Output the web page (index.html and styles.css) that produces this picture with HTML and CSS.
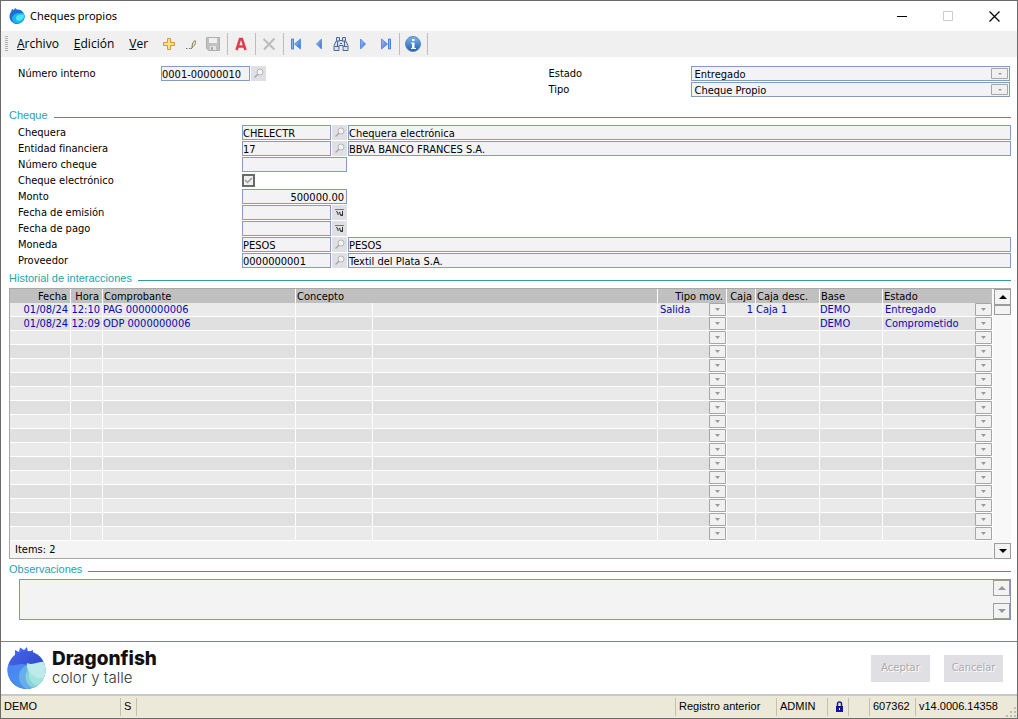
FILE: index.html
```html
<!DOCTYPE html>
<html lang="es">
<head>
<meta charset="utf-8">
<title>Cheques propios</title>
<link rel="stylesheet" href="styles.css">
</head>
<body>
<svg class="defs" aria-hidden="true">
  <defs>
    <linearGradient id="g-dark" x1="0" y1="0" x2="1" y2="1"><stop offset="0" stop-color="#4a6cf2"/><stop offset="1" stop-color="#2335b8"/></linearGradient>
    <linearGradient id="g-mid" x1="0" y1="0" x2="1" y2="1"><stop offset="0" stop-color="#4f80f5"/><stop offset="1" stop-color="#3f9be6"/></linearGradient>
    <linearGradient id="g-light" x1="1" y1="0" x2="0" y2="1"><stop offset="0" stop-color="#c9f2ec"/><stop offset="1" stop-color="#6fc9dd"/></linearGradient>
    <linearGradient id="g-info" x1="0" y1="0" x2="0" y2="1"><stop offset="0" stop-color="#7db4ea"/><stop offset="1" stop-color="#1f5fb0"/></linearGradient>
    <linearGradient id="g-arrow" x1="0" y1="0" x2="1" y2="1"><stop offset="0" stop-color="#a9c9fb"/><stop offset="1" stop-color="#2b63dd"/></linearGradient>
    <clipPath id="logo-body"><circle cx="19.500" cy="24" r="19"/></clipPath>
    <symbol id="lens" viewBox="0 0 15 15"><circle cx="9" cy="6" r="3" fill="#f4f4f4" stroke="#b4b4b4"/><path d="M6.800 8.200L3.500 11.500" stroke="#a8a8a8" stroke-width="1.500"/></symbol>
    <symbol id="cal" viewBox="0 0 15 15"><path d="M3 4.500h9" stroke="#777"/><path d="M4 6.500l2 1v2.500M7 7.500h1v2l2 1M10.500 6v5M8 10h3" fill="none" stroke="#333"/></symbol>
  </defs>
</svg>
<div class="window">
  <header class="titlebar">
    <svg class="app-icon" viewBox="0 0 16 16"><path d="M2 4L3 1l2 1 1-2 2 1.500C12 1 15 4 15.500 8A7.500 7.500 0 1 1 2 4z" fill="#1b6fd6"/><path d="M3 10c1-4 5-6 12-4.500A7 7 0 0 1 8 15.500C5 15 3 13 3 10z" fill="#19b5ec"/><path d="M7 10c0-3 3-4 8-3.500A6 6 0 0 1 10 13c-2 0-3-1-3-3z" fill="#4fe6f2"/></svg>
    <h1>Cheques propios</h1>
    <div class="win-buttons">
      <button aria-label="Minimizar"><svg viewBox="0 0 11 11"><path d="M0 5.500h10" stroke="#000"/></svg></button>
      <button aria-label="Maximizar" disabled><svg viewBox="0 0 11 11"><path d="M.5.500h9v9h-9z" fill="none" stroke="#ccc"/></svg></button>
      <button aria-label="Cerrar"><svg viewBox="0 0 11 11"><path d="M.5.500l10 10M10.500.500l-10 10" stroke="#000" stroke-width="1.200"/></svg></button>
    </div>
  </header>
  <nav class="toolbar">
    <span class="grip"></span>
    <button class="menu"><u>A</u>rchivo</button>
    <button class="menu"><u>E</u>dición</button>
    <button class="menu"><u>V</u>er</button>
    <button class="tool" aria-label="Nuevo"><svg viewBox="0 0 16 16"><path d="M6.500 2.500h3v4h4v3h-4v4h-3v-4h-4v-3h4z" fill="#fbe08a" stroke="#cf9a35"/></svg></button>
    <button class="tool" aria-label="Editar"><svg viewBox="0 0 16 16"><path d="M3 12.500h1.500M6 12.500h1.500" stroke="#777"/><path d="M9 11.500c0-3 1-6 3-7 1.500 1 0 5-3 7l-1 1.500" fill="#f3f2cf" stroke="#77764e"/></svg></button>
    <button class="tool" aria-label="Guardar"><svg viewBox="0 0 16 16"><path d="M1.500 1.500h13v13h-11l-2-2z" fill="#c0c0c0" stroke="#b0b0b0"/><path d="M4 2h8v5H4z" fill="#f0f0f0"/><path d="M5 10h6v4H5z" fill="#e4e4e4"/><path d="M6 11h2v3H6z" fill="#a8a8a8"/></svg></button>
    <span class="sep"></span>
    <button class="tool" aria-label="Anular"><svg viewBox="0 0 16 16"><path d="M3.500 14L7 3h2l3.500 11M5.500 10.500h5" fill="none" stroke="#e23b4a" stroke-width="2.500"/></svg></button>
    <span class="sep"></span>
    <button class="tool" aria-label="Eliminar"><svg viewBox="0 0 16 16"><path d="M2.500 3l11 10.500M13.500 2.500L3 13.500" stroke="#bcbcbc" stroke-width="2"/></svg></button>
    <span class="sep"></span>
    <button class="tool" aria-label="Primero"><svg viewBox="0 0 16 16"><path d="M2.500 3v10h2V3z" fill="#8fb5f5" stroke="#4a7fe0"/><path d="M11.500 3v10L5.500 8z" fill="url(#g-arrow)" stroke="#5c8fe8"/></svg></button>
    <button class="tool" aria-label="Anterior"><svg viewBox="0 0 16 16"><path d="M10.500 3v10L5.500 8z" fill="url(#g-arrow)" stroke="#5c8fe8"/></svg></button>
    <button class="tool" aria-label="Buscar"><svg viewBox="0 0 16 16"><path d="M3.500 1.500h3v3h3v-3h3v3l2.500 5v5h-5v-5h-4v5H1v-5l2.500-5z" fill="#d6e2f3" stroke="#50688f"/><path d="M3 5h4M9 5h4M1.500 10.500h4.500M10 10.500h4.500M7 7.500h2M4.500 5v5M11.500 5v5" stroke="#50688f"/></svg></button>
    <button class="tool" aria-label="Siguiente"><svg viewBox="0 0 16 16"><path d="M5.500 3v10l5-5z" fill="url(#g-arrow)" stroke="#5c8fe8"/></svg></button>
    <button class="tool" aria-label="Último"><svg viewBox="0 0 16 16"><path d="M4.500 3v10l6-5z" fill="url(#g-arrow)" stroke="#5c8fe8"/><path d="M11.500 3v10h2V3z" fill="#8fb5f5" stroke="#4a7fe0"/></svg></button>
    <span class="sep"></span>
    <button class="tool" aria-label="Información"><svg viewBox="0 0 16 16"><circle cx="8" cy="8" r="7.500" fill="url(#g-info)" stroke="#5b87bd"/><path d="M7 3h2.500v2H7zM6 6.500h3.500V12H11v1H6v-1h1V7.500H6z" fill="#fff"/></svg></button>
    <span class="sep"></span>
  </nav>

  <main class="content">
    <div class="head">
      <div class="row narrow"><label for="num">Número interno</label><input class="code" id="num" value="0001-00000010" readonly><button class="pick" aria-label="Buscar número"><svg><use href="#lens"/></svg></button></div>
      <div class="row narrow"><label for="est">Estado</label><select class="combo" id="est"><option>Entregado</option></select></div>
      <div class="row narrow right"><label for="tipo">Tipo</label><select class="combo" id="tipo"><option>Cheque Propio</option></select></div>
    </div>

    <section class="group first">
      <h2>Cheque</h2>
      <div class="row"><label for="cheq">Chequera</label><input class="code" id="cheq" value="CHELECTR" readonly><button class="pick" aria-label="Buscar chequera"><svg><use href="#lens"/></svg></button><input class="desc" aria-label="Descripción de chequera" value="Chequera electrónica" readonly></div>
      <div class="row"><label for="ent">Entidad financiera</label><input class="code" id="ent" value="17" readonly><button class="pick" aria-label="Buscar entidad"><svg><use href="#lens"/></svg></button><input class="desc" aria-label="Descripción de entidad" value="BBVA BANCO FRANCES S.A." readonly></div>
      <div class="row"><label for="nch">Número cheque</label><input class="amount" id="nch" readonly></div>
      <div class="row"><label for="elec">Cheque electrónico</label><input class="check" id="elec" type="checkbox" checked></div>
      <div class="row"><label for="monto">Monto</label><input class="amount" id="monto" value="500000.00" readonly></div>
      <div class="row"><label for="fem">Fecha de emisión</label><input class="code" id="fem" readonly><button class="pick" aria-label="Calendario de emisión"><svg><use href="#cal"/></svg></button></div>
      <div class="row"><label for="fpa">Fecha de pago</label><input class="code" id="fpa" readonly><button class="pick" aria-label="Calendario de pago"><svg><use href="#cal"/></svg></button></div>
      <div class="row"><label for="mon">Moneda</label><input class="code" id="mon" value="PESOS" readonly><button class="pick" aria-label="Buscar moneda"><svg><use href="#lens"/></svg></button><input class="desc" aria-label="Descripción de moneda" value="PESOS" readonly></div>
      <div class="row"><label for="prov">Proveedor</label><input class="code" id="prov" value="0000000001" readonly><button class="pick" aria-label="Buscar proveedor"><svg><use href="#lens"/></svg></button><input class="desc" aria-label="Nombre del proveedor" value="Textil del Plata S.A." readonly></div>
    </section>

    <section class="group">
      <h2>Historial de interacciones</h2>
      <div class="history">
        <div class="sheet">
          <table>
            <colgroup><col class="c-fecha"><col class="c-hora"><col class="c-comp"><col class="c-con"><col><col class="c-tipo"><col class="c-caja"><col class="c-desc"><col class="c-base"><col class="c-estado"></colgroup>
            <thead><tr><th class="num">Fecha</th><th class="num">Hora</th><th>Comprobante</th><th colspan="2">Concepto</th><th class="num">Tipo mov.</th><th class="num">Caja</th><th>Caja desc.</th><th>Base</th><th>Estado</th></tr></thead>
            <tbody id="rows"></tbody>
          </table>
          <p class="items">Items: 2</p>
        </div>
        <div class="scroll"><button class="up" aria-label="Subir"></button><span class="thumb"></span><button class="down" aria-label="Bajar"></button></div>
      </div>
    </section>

    <section class="group">
      <h2><label for="obs">Observaciones</label></h2>
      <div class="notes"><textarea id="obs" readonly></textarea><div class="scroll off"><button class="up" aria-label="Subir observaciones"></button><button class="down" aria-label="Bajar observaciones"></button></div></div>
    </section>
  </main>

  <footer class="actions">
    <svg class="logo" viewBox="0 0 40 44"><path d="M6 12l2-3 0-5 4 2 1-4.500 4 2.500 3-3 1 5 5-2 0 6z" fill="#4565ee"/><g clip-path="url(#logo-body)"><path d="M0 0h40v44H0z" fill="url(#g-dark)"/><path d="M0 18c6 4 12-2 20 1 3 1 4 3 4 3v22H0z" fill="url(#g-mid)"/><circle cx="25" cy="31" r="13" fill="#69aeea"/><circle cx="30" cy="31" r="11.500" fill="#86d3da"/><circle cx="33" cy="29" r="11" fill="#a5e3de"/><path d="M20 17c6 3 11-2 20-1v14c-4 3-9 3-13 0-5-3-8-8-7-13z" fill="#bdebea"/></g></svg>
    <div class="brand"><strong>Dragonfish</strong><span>color y talle</span></div>
    <button class="action" disabled>Aceptar</button>
    <button class="action" disabled>Cancelar</button>
  </footer>
  <div class="status">
    <span class="s-base">DEMO</span><span class="s-flag">S</span><span class="s-fill"></span><span class="s-reg">Registro anterior</span><span class="s-user">ADMIN</span><span class="s-lock"><svg viewBox="0 0 9 11"><path d="M2.500 5V3a2 2 0 0 1 4 0v2" fill="none" stroke="#1a1a9a" stroke-width="1.500"/><path d="M1 5h7v6H1z" fill="#15159a"/><path d="M4 7h1v2H4z" fill="#fff"/></svg></span><span class="s-lock"></span><span class="s-num">607362</span><span class="s-ver">v14.0006.14358</span>
    <svg class="resize" viewBox="0 0 11 11"><path d="M8 0h2v2H8zM4 4h2v2H4zM8 4h2v2H8zM0 8h2v2H0zM4 8h2v2H4zM8 8h2v2H8z" fill="#c0bcaa"/></svg>
  </div>
</div>
<script src="app.js"></script>
</body>
</html>
```
FILE: app.js
```js
const entries = [
  ["01/08/24", "12:10", "PAG 0000000006", "", "", "Salida", "1", "Caja 1", "DEMO", "Entregado"],
  ["01/08/24", "12:09", "ODP 0000000006", "", "", "", "", "", "DEMO", "Comprometido"]
];
const ROW_COUNT = 17;
const numeric = [0, 1, 6];
const selectable = { 5: "Tipo de movimiento", 9: "Estado" };
const body = document.getElementById("rows");
for (let r = 0; r < ROW_COUNT; r++) {
  const tr = body.insertRow();
  for (let c = 0; c < 10; c++) {
    const td = tr.insertCell();
    const text = entries[r] ? entries[r][c] : "";
    if (numeric.includes(c)) td.className = "num";
    if (c in selectable) {
      const select = document.createElement("select");
      select.setAttribute("aria-label", selectable[c] + ", fila " + (r + 1));
      select.add(new Option(text));
      td.className = "pickcell";
      td.append(select);
    } else {
      td.textContent = text;
    }
  }
}
```
FILE: styles.css
```css
* { box-sizing: border-box; }
body { margin: 0; font: 11px/14px "DejaVu Sans Condensed", "Noto Sans", sans-serif; color: #000; background: #fff; }
button, input, select, textarea { font: inherit; color: inherit; margin: 0; padding: 0; border: 0; border-radius: 0; appearance: none; background: none; outline: 0; }
h1, h2, p { margin: 0; font-weight: normal; }
.defs { position: absolute; width: 0; height: 0; }
.window { display: flex; flex-direction: column; min-height: 100vh; border: 1px solid #6b6b6b; }

.titlebar { display: flex; align-items: center; height: 30px; padding-left: 8px; }
.app-icon { width: 16px; height: 16px; }
.titlebar h1 { flex: 1; margin-left: 5px; font: 11px/16px "Noto Sans", sans-serif; }
.win-buttons { display: flex; }
.win-buttons button { width: 46px; height: 30px; display: grid; place-items: center; }
.win-buttons svg { width: 11px; height: 11px; }

.toolbar { display: flex; align-items: center; height: 26px; background: #f0f0f0; }
.grip { width: 3px; height: 16px; margin: 0 1px 0 4px; background: repeating-linear-gradient(#b0b0b0 0 1px, #f0f0f0 1px 2px); }
.menu { padding: 0 8px 0 7px; font: 12px/16px "Open Sans", sans-serif; }
.grip + .menu { padding-left: 8px; }
.menu + .tool { margin-left: 2px; }
.tool { width: 22px; height: 22px; display: grid; place-items: center; }
.tool svg { width: 16px; height: 16px; }
.sep { width: 1px; height: 22px; margin: 0 2px 0 3px; background: #bdbdbd; }

.content { flex: 1; padding: 9px 6px 20px 8px; }
.head { display: grid; grid-template-columns: 531fr 472fr; }
.head .right { grid-column: 2; }
.row { display: flex; align-items: flex-start; height: 16px; padding-left: 9px; }
.row label { width: 224px; flex: none; line-height: 16px; }
.row.narrow label { width: 143px; }
.row input, .combo { height: 15px; border: 1px solid #849cc0; background-color: #f3f3f5; line-height: 13px; }
.row input { padding: 1px 0 0; }
.code { width: 89px; }
.amount { width: 105px; }
.row #monto { text-align: right; padding-right: 2px; }
.pick { width: 15px; height: 15px; margin: 0 1px; background: #e0e0e4; }
.pick svg { display: block; width: 15px; height: 15px; }
.desc { flex: 1; }
.combo { flex: 1; padding: 1px 0 0 2px; margin-right: 1px; background: #f3f3f5 url("data:image/svg+xml,%3Csvg xmlns='http://www.w3.org/2000/svg' width='18' height='11'%3E%3Cpath d='M.5.500h16v10H.5z' fill='%23f0f0f0' stroke='%23a6a6a6'/%3E%3Cpath d='M7 5h4L9 7z' fill='%23999'/%3E%3C/svg%3E") no-repeat right 0 top 1px; }
.row .check { width: 13px; height: 13px; border: 2px solid #6a6a6a; margin-top: 1px; padding: 0; background: #efefef url("data:image/svg+xml,%3Csvg xmlns='http://www.w3.org/2000/svg' width='9' height='9'%3E%3Cpath d='M1 4l2.500 2.500L8 2' fill='none' stroke='%23999' stroke-width='1.500'/%3E%3C/svg%3E"); }

.group { margin-top: 1px; }
.group.first { margin-top: 9px; }
.group:last-child { margin-top: 2px; }
.group h2 { display: flex; align-items: center; gap: 6px; height: 16px; margin-bottom: 2px; font: 11px/16px "Liberation Sans", sans-serif; color: #2a9fae; }
.group h2::after { content: ""; flex: 1; height: 1px; margin-top: 4px; background: #2f9aa8; }

.history { display: flex; border-top: 1px solid #a8a8a8; }
.sheet { flex: 1; min-width: 0; border: 1px solid #a8a8a8; border-width: 0 0 1px 1px; background: #f4f4f4; }
table { width: 100%; table-layout: fixed; border-collapse: separate; border-spacing: 0; }
th, td { height: 14px; padding: 0 0 0 1px; line-height: 13px; font-weight: normal; text-align: left; white-space: nowrap; border: 1px solid #fff; border-width: 0 1px 1px 0; }
th { padding-top: 1px; border-bottom: 0; background: #c0c0c0; }
td { padding-left: 0; color: #0808b4; background: #eaeaea; }
tbody tr:nth-child(even) td { background: #e0e0e0; }
th.num { text-align: right; padding-right: 3px; }
td.num { text-align: right; padding-right: 2px; }
.c-fecha { width: 61px; } .c-hora { width: 32px; } .c-comp { width: 193px; } .c-con { width: 77px; }
.c-tipo { width: 69px; } .c-caja { width: 29px; } .c-desc { width: 64px; } .c-base { width: 63px; } .c-estado { width: 110px; }
.pickcell select { display: block; width: 100%; height: 13px; padding-left: 2px; background: url("data:image/svg+xml,%3Csvg xmlns='http://www.w3.org/2000/svg' width='17' height='13'%3E%3Cpath d='M.5.500h16v12H.5z' fill='%23f1f1f1' stroke='%23a6a6a6'/%3E%3Cpath d='M6 5h5L8.500 8z' fill='%23999'/%3E%3C/svg%3E") no-repeat right; }
.items { height: 17px; padding-left: 5px; line-height: 18px; }

.scroll { display: flex; flex-direction: column; width: 18px; padding-left: 1px; background: #f8f8f8; }
.scroll button { height: 16px; border: 1px solid #9c9c9c; background: #f3f3f3; display: grid; place-items: center; }
.scroll button::before { content: ""; border: 4px solid transparent; border-top-width: 0; border-bottom: 4px solid #000; }
.scroll .down::before { border-width: 4px 4px 0; border-top-color: #000; }
.scroll .down { margin-top: auto; }
.thumb { height: 10px; border: 1px solid #9c9c9c; background: #f3f3f3; }

.notes { display: flex; margin-left: 10px; border: 1px solid #8494b0; background: #f4f3f4; }
.notes textarea { flex: 1; height: 39px; resize: none; }
.off { background: none; }
.scroll.off .up::before { border-bottom-color: #999; }
.scroll.off .down::before { border-top-color: #999; }

.actions { display: flex; align-items: center; gap: 14px; height: 53px; padding: 0 14px 0 6px; border-top: 1px solid #2aa5ab; }
.logo { width: 40px; height: 44px; }
.brand { flex: 1; margin-left: -9px; font-family: Inter, "Open Sans", sans-serif; display: flex; flex-direction: column; }
.brand strong { font-size: 19px; line-height: 20px; font-weight: 800; color: #111; }
.brand span { font-size: 15px; line-height: 18px; font-weight: 300; color: #333; }
.action { width: 59px; height: 27px; background: #e0e0e4; color: #a9a9a9; text-shadow: 1px 1px #fff; }

.status { display: flex; align-items: center; height: 24px; background: #ece9d8; border-top: 2px solid #c8c8c8; font: 11px/20px "Liberation Sans", sans-serif; }
.status span { height: 18px; line-height: 16px; padding-left: 3px; border-right: 1px solid #c4c0ae; white-space: nowrap; }
.s-base { width: 120px; }
.s-flag { width: 16px; }
.s-fill { flex: 1; }
.s-reg { width: 101px; }
.s-user { width: 51px; }
.s-lock { width: 21px; }
.s-lock svg { width: 9px; height: 11px; margin: 3px 4px; display: block; }
.s-num { width: 46px; }
.status .s-ver { width: 90px; border: 0; }
.resize { width: 11px; height: 11px; align-self: flex-end; }
```
